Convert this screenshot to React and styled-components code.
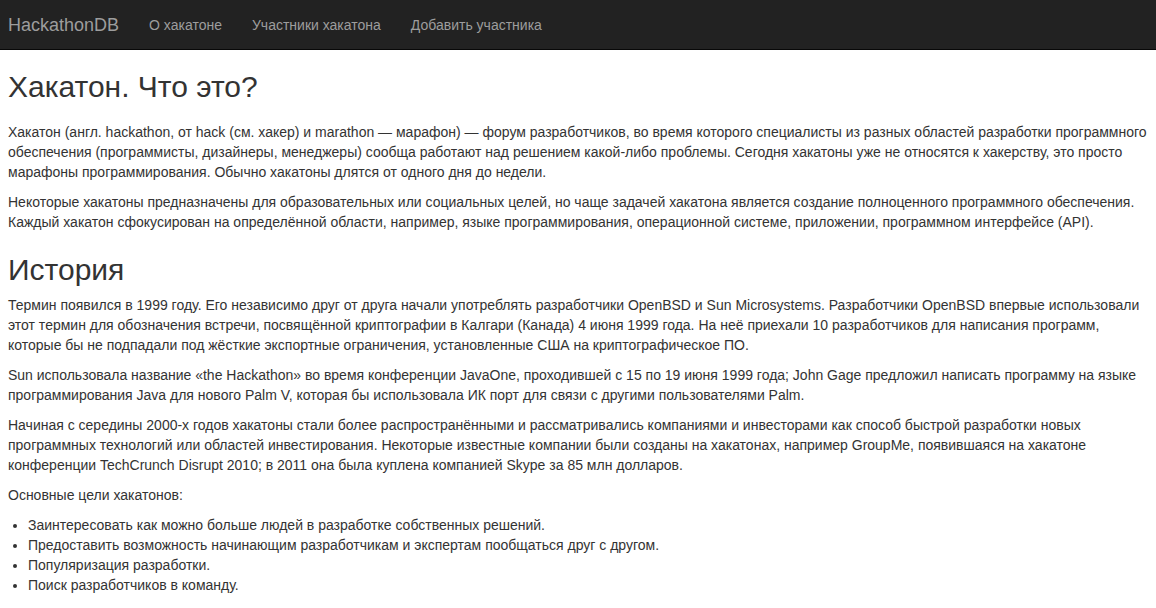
import React from 'react'
import styled, { createGlobalStyle } from 'styled-components'

const GlobalStyle = createGlobalStyle`
    * { box-sizing: border-box; }
    body {
        margin: 0;
        font-family: "Liberation Sans", Arial, Helvetica, sans-serif;
        font-size: 14px;
        line-height: 1.42857;
        color: #333;
        background: #fff;
    }
`

const navLinks = ['О хакатоне', 'Участники хакатона', 'Добавить участника']

const goals = [
    'Заинтересовать как можно больше людей в разработке собственных решений.',
    'Предоставить возможность начинающим разработчикам и экспертам пообщаться друг с другом.',
    'Популяризация разработки.',
    'Поиск разработчиков в команду.',
]

export default function App() {
    return (
        <>
            <GlobalStyle />
            <Navbar>
                <Brand href="#">HackathonDB</Brand>
                <NavList>
                    {navLinks.map((l) => (
                        <li key={l}><NavLink href="#">{l}</NavLink></li>
                    ))}
                </NavList>
            </Navbar>
            <Content>
                <Heading $first>Хакатон. Что это?</Heading>
                <Text>
                    Хакатон (англ. hackathon, от hack (см. хакер) и marathon — марафон) — форум разработчиков, во время которого специалисты из разных областей разработки программного обеспечения (программисты, дизайнеры, менеджеры) сообща работают над решением какой-либо проблемы. Сегодня хакатоны уже не относятся к хакерству, это просто марафоны программирования. Обычно хакатоны длятся от одного дня до недели.
                </Text>
                <Text>
                    Некоторые хакатоны предназначены для образовательных или социальных целей, но чаще задачей хакатона является создание полноценного программного обеспечения. Каждый хакатон сфокусирован на определённой области, например, языке программирования, операционной системе, приложении, программном интерфейсе (API).
                </Text>
                <Heading>История</Heading>
                <Text>
                    Термин появился в 1999 году. Его независимо друг от друга начали употреблять разработчики OpenBSD и Sun Microsystems. Разработчики OpenBSD впервые использовали этот термин для обозначения встречи, посвящённой криптографии в Калгари (Канада) 4 июня 1999 года. На неё приехали 10 разработчиков для написания программ, которые бы не подпадали под жёсткие экспортные ограничения, установленные США на криптографическое ПО.
                </Text>
                <Text>
                    Sun использовала название «the Hackathon» во время конференции JavaOne, проходившей с 15 по 19 июня 1999 года; John Gage предложил написать программу на языке программирования Java для нового Palm V, которая бы использовала ИК порт для связи с другими пользователями Palm.
                </Text>
                <Text>
                    Начиная с середины 2000-х годов хакатоны стали более распространёнными и рассматривались компаниями и инвесторами как способ быстрой разработки новых программных технологий или областей инвестирования. Некоторые известные компании были созданы на хакатонах, например GroupMe, появившаяся на хакатоне конференции TechCrunch Disrupt 2010; в 2011 она была куплена компанией Skype за 85 млн долларов.
                </Text>
                <Text>Основные цели хакатонов:</Text>
                <Goals>
                    {goals.map((g) => (
                        <li key={g}>{g}</li>
                    ))}
                </Goals>
            </Content>
        </>
    )
}

let Navbar = styled.nav`
    display: flex;
    align-items: center;
    height: 50px;
    background-color: #222;
    border-bottom: 1px solid #080808;
    padding: 0 8px;
`
let Brand = styled.a`
    font-size: 18px;
    line-height: 20px;
    color: #9d9d9d;
    text-decoration: none;
    padding: 15px 0;
    margin-right: 15px;
`
let NavList = styled.ul`
    display: flex;
    list-style: none;
    margin: 0;
    padding: 0;
`
let NavLink = styled.a`
    display: block;
    padding: 15px;
    line-height: 20px;
    color: #9d9d9d;
    text-decoration: none;
`
let Content = styled.main`
    padding: 0 8px;
`
let Heading = styled.h2`
    font-size: 30px;
    font-weight: 500;
    line-height: 1.1;
    margin: 20px 0 ${(p) => (p.$first ? '20px' : '10px')};
`
let Text = styled.p`
    margin: 0 0 10px;
`
let Goals = styled.ul`
    margin: 0 0 10px;
    padding-left: 20px;
`
